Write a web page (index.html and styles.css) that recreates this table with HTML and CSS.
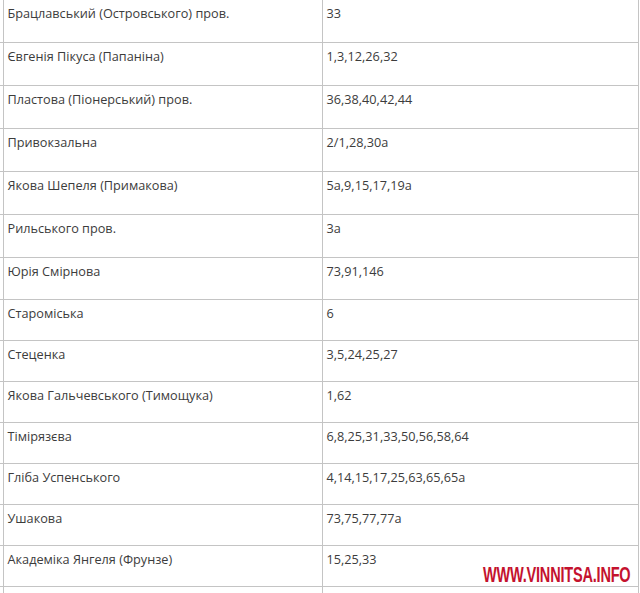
FILE: index.html
```html
<!DOCTYPE html>
<html lang="uk">
<head>
<meta charset="utf-8">
<link rel="stylesheet" href="styles.css">
</head>
<body>
<div class="wrap">
<table class="streets">
<tbody>
<tr class="r43"><td class="stub"></td><td class="name">Брацлавський (Островського) пров.</td><td class="nums">33</td></tr>
<tr class="r43"><td class="stub"></td><td class="name">Євгенія Пікуса (Папаніна)</td><td class="nums">1,3,12,26,32</td></tr>
<tr class="r43"><td class="stub"></td><td class="name">Пластова (Піонерський) пров.</td><td class="nums">36,38,40,42,44</td></tr>
<tr class="r43"><td class="stub"></td><td class="name">Привокзальна</td><td class="nums">2/1,28,30а</td></tr>
<tr class="r43"><td class="stub"></td><td class="name">Якова Шепеля (Примакова)</td><td class="nums">5а,9,15,17,19а</td></tr>
<tr class="r43"><td class="stub"></td><td class="name">Рильського пров.</td><td class="nums">3а</td></tr>
<tr class="r42"><td class="stub"></td><td class="name">Юрія Смірнова</td><td class="nums">73,91,146</td></tr>
<tr class="r41"><td class="stub"></td><td class="name">Староміська</td><td class="nums">6</td></tr>
<tr class="r41"><td class="stub"></td><td class="name">Стеценка</td><td class="nums">3,5,24,25,27</td></tr>
<tr class="r41"><td class="stub"></td><td class="name">Якова Гальчевського (Тимощука)</td><td class="nums">1,62</td></tr>
<tr class="r41"><td class="stub"></td><td class="name">Тімірязєва</td><td class="nums">6,8,25,31,33,50,56,58,64</td></tr>
<tr class="r41"><td class="stub"></td><td class="name">Гліба Успенського</td><td class="nums">4,14,15,17,25,63,65,65а</td></tr>
<tr class="r41"><td class="stub"></td><td class="name">Ушакова</td><td class="nums">73,75,77,77а</td></tr>
<tr class="r41"><td class="stub"></td><td class="name">Академіка Янгеля (Фрунзе)</td><td class="nums">15,25,33</td></tr>
<tr class="r41"><td class="stub"></td><td class="name">&nbsp;</td><td class="nums">&nbsp;</td></tr>
</tbody>
</table>
<div class="watermark">WWW.VINNITSA.INFO</div>
</div>
</body>
</html>
```
FILE: styles.css
```css
html, body {
  margin: 0;
  padding: 0;
  background: #ffffff;
  overflow: hidden;
}
.wrap {
  position: relative;
  width: 640px;
  height: 593px;
  overflow: hidden;
}
.streets {
  border-collapse: collapse;
  table-layout: fixed;
  width: 638px;
  margin-top: -1px;
  font-family: "Open Sans", "Noto Sans", sans-serif;
  font-size: 12.7px;
  color: #3c3c3c;
}
.streets td {
  border: 1px solid #c4c4c4;
  padding: 4px 4px 0 4px;
  vertical-align: top;
  line-height: 18px;
  white-space: nowrap;
  box-sizing: border-box;
}
.streets td.stub {
  width: 3px;
  padding: 0;
  border-left: none;
}
.streets td.name { width: 319px; }
.streets td.nums { width: 316px; }
.r43 td { height: 43px; }
.r42 td { height: 42px; }
.r41 td { height: 41px; }
.watermark {
  position: absolute;
  right: 10px;
  top: 563px;
  font-family: "Liberation Sans", Arial, sans-serif;
  font-weight: bold;
  font-size: 22px;
  line-height: 24px;
  color: #c4122e;
  transform: scaleX(0.66);
  transform-origin: right center;
  letter-spacing: -0.3px;
}
```
